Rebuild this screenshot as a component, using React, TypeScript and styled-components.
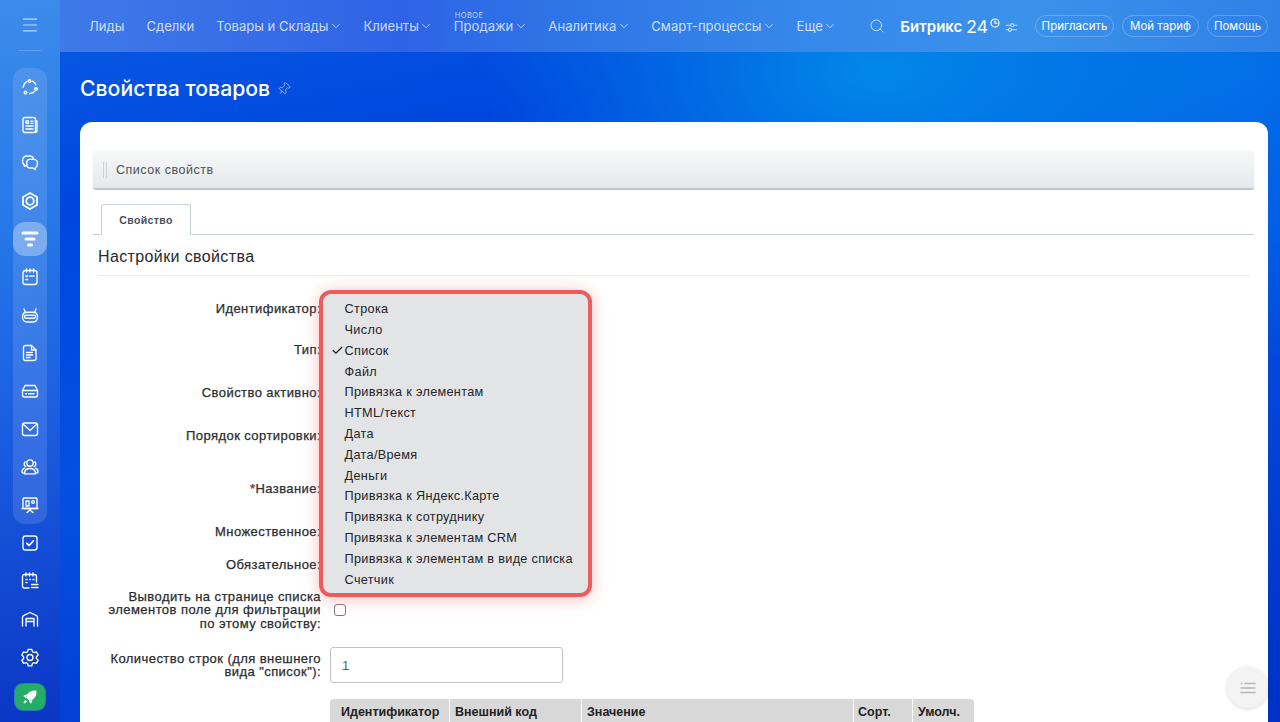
import React from 'react';
import styled, { createGlobalStyle } from 'styled-components';
import { ChevronDown, Search, Pin, Menu, Check } from 'lucide-react';

const GlobalStyle = createGlobalStyle`
  html, body {
    margin: 0;
    padding: 0;
    height: 722px;
    overflow: hidden;
    font-family: "Liberation Sans", Arial, sans-serif;
  }
  * {
    box-sizing: border-box;
  }
`;

const Page = styled.div`
  width: 1280px;
  height: 722px;
  display: flex;
  overflow: hidden;
  position: relative;
  background:
    radial-gradient(400px 220px at 880px 70px, #0288e8 0%, rgba(2, 136, 232, 0) 100%),
    radial-gradient(500px 300px at 1240px 60px, #0270e8 0%, rgba(2, 112, 232, 0) 100%),
    linear-gradient(168deg, #0a5ee4 0%, #0046de 22%, #0450e2 50%, #0030c4 100%);
`;

const Sidebar = styled.aside`
  width: 60px;
  flex: none;
  display: flex;
  flex-direction: column;
  align-items: center;
  background: linear-gradient(170deg, #3d8ceb 0%, #2474e6 35%, #1a5ce0 60%, #0a36c4 100%);
`;

const Burger = styled.div`
  height: 51px;
  width: 22px;
  display: flex;
  align-items: center;
  justify-content: center;
  color: #bcd6f8;
  border-bottom: 1px solid rgba(255, 255, 255, 0.2);
  flex: none;
`;

const SideGroup = styled.div`
  margin-top: 17px;
  width: 34px;
  border-radius: 12px;
  background: rgba(255, 255, 255, 0.12);
  display: flex;
  flex-direction: column;
`;

const SideItem = styled.div<{ $active?: boolean }>`
  width: 34px;
  height: 34px;
  margin: 2px 0;
  flex: none;
  display: flex;
  align-items: center;
  justify-content: center;
  border-radius: 12px;
  color: #fff;
  background: ${(p) => (p.$active ? 'rgba(255, 255, 255, 0.32)' : 'transparent')};
`;

const RocketTile = styled.div`
  width: 30px;
  height: 26px;
  margin-top: 8px;
  flex: none;
  display: flex;
  align-items: center;
  justify-content: center;
  border-radius: 8px;
  color: #fff;
  background: #25ad68;
  box-shadow: 0 0 0 1px rgba(70, 210, 140, 0.45);
`;

const Glyph = styled.svg.attrs({
  viewBox: '0 0 20 20',
  fill: 'none',
  stroke: 'currentColor',
  strokeWidth: 1.35,
  strokeLinecap: 'round',
  strokeLinejoin: 'round',
})<{ $size?: number }>`
  width: ${(p) => p.$size ?? 20}px;
  height: ${(p) => p.$size ?? 20}px;
  display: block;
`;

const Main = styled.main`
  flex: 1;
  min-width: 0;
  display: flex;
  flex-direction: column;
`;

const TopBar = styled.header`
  height: 52px;
  flex: none;
  display: flex;
  align-items: center;
  padding: 0 12px 0 29px;
  background: linear-gradient(90deg, #3f7ae8 0%, #2f63e6 28%, #2d6fe6 36%, #3687ea 60%, #3a92ea 80%, #3080e8 100%);
`;

const Nav = styled.nav`
  display: flex;
  align-items: center;
  gap: 22px;
`;

const NavItem = styled.a`
  position: relative;
  display: flex;
  align-items: center;
  gap: 2px;
  font-family: Inter, "Liberation Sans", sans-serif;
  font-size: 13.1px;
  color: rgba(255, 255, 255, 0.76);
  white-space: nowrap;
`;

const NavChevron = styled(ChevronDown)`
  margin: 0 -1.5px;
  color: rgba(255, 255, 255, 0.8);
`;

const NewTag = styled.span`
  position: absolute;
  left: 1px;
  top: -7px;
  font-size: 7.5px;
  letter-spacing: 0.4px;
  color: rgba(255, 255, 255, 0.72);
`;

const TopRight = styled.div`
  margin-left: auto;
  display: flex;
  align-items: center;
`;

const SearchButton = styled.span`
  color: rgba(255, 255, 255, 0.72);
  display: flex;
  margin-right: 15px;
`;

const Brand = styled.div`
  display: flex;
  align-items: center;
  font-family: Inter, "Liberation Sans", sans-serif;
  font-size: 15px;
  font-weight: 600;
  color: #fff;
  white-space: nowrap;
`;

const BrandNum = styled.span`
  margin-left: 4px;
  font-size: 17.5px;
  font-weight: 400;
`;

const BrandClock = styled.span`
  display: flex;
  margin: -6px 0 0 2px;
  color: #fff;
`;

const SettingsIcon = styled.span`
  display: flex;
  margin: 2px 17px 0 5px;
  color: rgba(255, 255, 255, 0.65);
`;

const PillRow = styled.div`
  display: flex;
  gap: 8px;
`;

const Pill = styled.button<{ $w: number }>`
  width: ${(p) => p.$w}px;
  height: 22px;
  padding: 0;
  border: 1px solid rgba(255, 255, 255, 0.24);
  border-radius: 11px;
  background: transparent;
  color: #fff;
  font-family: Inter, "Liberation Sans", sans-serif;
  font-size: 11.5px;
  white-space: nowrap;
`;

const TitleRow = styled.div`
  height: 70px;
  flex: none;
  display: flex;
  align-items: center;
  gap: 7px;
  padding: 1px 0 0 20px;
`;

const Title = styled.h1`
  margin: 0;
  font-family: Inter, "Liberation Sans", sans-serif;
  font-size: 21.2px;
  font-weight: 500;
  color: #fff;
`;

const PinIcon = styled.span`
  display: flex;
  color: rgba(255, 255, 255, 0.65);
  transform: rotate(40deg);
  margin-top: 3px;
`;

const Card = styled.section`
  flex: 1;
  min-height: 0;
  margin: 0 12px 0 20px;
  padding: 29px 14px 0 13px;
  border-radius: 12px 12px 0 0;
  background: #fff;
  overflow: hidden;
`;

const Toolbar = styled.div`
  height: 39px;
  display: flex;
  align-items: center;
  padding-left: 10px;
  border-radius: 3px;
  border-bottom: 2px solid #c0c7cb;
  background: linear-gradient(180deg, #f7f8f8 0%, #e4e9eb 100%);
  box-shadow: 0 0 1px rgba(0, 0, 0, 0.2);
`;

const Grip = styled.span`
  width: 4px;
  height: 16px;
  margin-right: 9px;
  border-left: 1px solid #cdd1d4;
  border-right: 1px solid #cdd1d4;
  background: #eef0f1;
`;

const ToolbarText = styled.span`
  font-size: 12.5px;
  letter-spacing: 0.52px;
  color: #4b5057;
`;

const TabBar = styled.div`
  margin-top: 14px;
  height: 31px;
  padding-left: 8px;
  border-bottom: 1px solid #c6d2d6;
`;

const Tab = styled.div`
  width: 90px;
  height: 31px;
  display: flex;
  align-items: center;
  justify-content: center;
  border: 1px solid #c6d2d6;
  border-bottom-color: #fff;
  border-radius: 3px 3px 0 0;
  background: #fff;
  font-size: 10.5px;
  font-weight: 700;
  letter-spacing: 0.35px;
  color: #4a4f57;
`;

const SectionTitle = styled.h2`
  margin: 0 4px 0 5px;
  height: 41px;
  display: flex;
  align-items: center;
  padding-top: 3px;
  border-bottom: 1px solid #e9ecee;
  font-size: 16px;
  font-weight: 400;
  letter-spacing: 0.38px;
  color: #26292e;
`;

const Form = styled.div`
  margin-top: 12px;
`;

const Row = styled.div<{ $h: number }>`
  height: ${(p) => p.$h}px;
  display: grid;
  grid-template-columns: 228px 1fr;
  align-items: center;
  column-gap: 9px;
`;

const Label = styled.label`
  padding-left: 12px;
  font-size: 13px;
  font-weight: 400;
  line-height: 13.5px;
  letter-spacing: 0.43px;
  -webkit-text-stroke: 0.25px #2a2c30;
  text-align: right;
  color: #2a2c30;
`;

const Required = styled.span`
  color: #e01010;
`;

const CheckBox = styled.span`
  display: block;
  width: 12px;
  height: 12px;
  margin-left: 4px;
  border: 1px solid #7c7c7c;
  border-radius: 3px;
  background: #fff;
`;

const TextField = styled.div`
  width: 233px;
  height: 36px;
  display: flex;
  align-items: center;
  padding-left: 11px;
  border: 1px solid #bfc3c7;
  border-radius: 3px;
  font-size: 13px;
  color: #535c69;
`;

const ValuesTable = styled.div`
  margin: 2px 0 0 237px;
  width: 644px;
  height: 40px;
  display: grid;
  grid-template-columns: 119px 131px 271px 58px 1fr;
  column-gap: 1px;
  border-radius: 4px 4px 0 0;
  overflow: hidden;
`;

const HeadCell = styled.div<{ $pad: number }>`
  background: #d8d8d8;
  padding: 6px 0 0 ${(p) => p.$pad}px;
  font-size: 12.5px;
  font-weight: 700;
  letter-spacing: 0;
  color: #222;
  white-space: nowrap;
`;

const SelectMenu = styled.ul`
  position: absolute;
  left: 319px;
  top: 290px;
  width: 273px;
  height: 307px;
  margin: 0;
  padding: 5.3px 0 0 0;
  list-style: none;
  border: 4px solid #ee5b5c;
  border-radius: 12px;
  background: #e3e4e6;
  box-shadow: 0 2px 16px rgba(238, 91, 92, 0.4);
`;

const MenuItem = styled.li`
  position: relative;
  height: 20.8px;
  line-height: 20.8px;
  padding-left: 21.6px;
  font-size: 12.7px;
  letter-spacing: 0.3px;
  color: #23252a;
  white-space: nowrap;
`;

const MenuCheck = styled.span`
  position: absolute;
  left: 8px;
  top: 3px;
  display: flex;
  color: #222;
`;

const FloatButton = styled.div`
  position: absolute;
  left: 1227px;
  top: 667px;
  width: 41px;
  height: 41px;
  display: flex;
  align-items: center;
  justify-content: center;
  border-radius: 50%;
  background: #f3f3f3;
  box-shadow: 0 1px 4px rgba(0, 0, 0, 0.14);
  color: #b4b8bd;
`;

const icons: Record<string, React.ReactNode> = {
  nodes: (
    <>
      <circle cx="9.500" cy="4" r="1.300" />
      <circle cx="16" cy="12" r="1.300" />
      <circle cx="5.500" cy="15.500" r="1.300" />
      <path d="M6.800 4.500C4.800 5.700 3.400 7.800 3.200 10.200M12.500 4.200c1.600.8 2.700 2 3.300 3.600M14.800 14.200c-1.200 1.500-2.900 2.300-5.300 2.300" />
    </>
  ),
  news: (
    <>
      <rect x="3" y="2.500" width="12.500" height="15" rx="2" />
      <path d="M15.500 6H17v9.500a2 2 0 0 1-2 2" />
      <path d="M6 6h2.500v2.200H6zM11 6.200h2M11 8.400h2M6 11h7M6 14h7" />
    </>
  ),
  chat: (
    <>
      <path d="M6.500 12.600H5.400l-1.200.8v-1.500A4 4 0 0 1 2.600 8.600V7a4 4 0 0 1 4-4h3a4 4 0 0 1 3.800 2.800" />
      <path d="M9.400 6.400H14a3.400 3.400 0 0 1 3.400 3.400v1.800a3.400 3.400 0 0 1-2 3.100v2L13 15H9.400A3 3 0 0 1 6.800 12V9a2.600 2.600 0 0 1 2.600-2.600z" />
    </>
  ),
  hex: (
    <>
      <path d="M10 2l7 4v8l-7 4-7-4V6z" strokeWidth="1.800" />
      <circle cx="10" cy="10" r="3.800" strokeWidth="1.800" />
    </>
  ),
  funnel: (
    <>
      <path d="M3 4h14" strokeWidth="3" />
      <path d="M6 10h8" strokeWidth="3" />
      <path d="M8.500 16h3" strokeWidth="3" />
    </>
  ),
  calendar: (
    <>
      <rect x="3" y="3.500" width="14" height="14" rx="2.500" />
      <path d="M6.500 2v3M10 2v3M13.500 2v3" />
      <path d="M6 9h1.500M10 9h1.500M13 9h1M6 12.500h1.500" strokeWidth="1.700" />
    </>
  ),
  robot: (
    <>
      <path d="M7 7.200h6c2.700 0 4.500 2 4.500 4.800 0 3-1.800 5-4.500 5H7c-2.700 0-4.500-2-4.500-5 0-2.800 1.800-4.800 4.500-4.800z" />
      <path d="M5.500 7.600 4 4M14.500 7.600 16 4" />
      <path d="M6 10.200h8a1.500 1.500 0 0 1 0 3H6a1.500 1.500 0 0 1 0-3z" />
    </>
  ),
  doc: (
    <>
      <path d="M5.500 2.500h6L16 7v8.500a2 2 0 0 1-2 2H5.500a2 2 0 0 1-2-2v-11a2 2 0 0 1 2-2z" />
      <path d="M11.500 2.500V7H16M6.500 9.500h6M6.500 12h6M6.500 14.500h3.500" />
    </>
  ),
  drive: (
    <>
      <path d="M5 4.500h10l2.500 5v4.500a2 2 0 0 1-2 2h-11a2 2 0 0 1-2-2V9.500z" />
      <path d="M2.500 9.500h15M5.500 12.700h1M8.500 12.700h5.500" />
    </>
  ),
  mail: (
    <>
      <rect x="2.500" y="4" width="15" height="12.500" rx="2" />
      <path d="m3 5 7 6.500L17 5" />
    </>
  ),
  users: (
    <>
      <circle cx="10" cy="6" r="3.200" />
      <path d="M4.500 16.800c0-3.200 2.200-5.300 5.500-5.300s5.500 2.100 5.500 5.300zM5.800 9.500a2.600 2.600 0 0 1-.5-4.600M14.200 9.500a2.600 2.600 0 0 0 .5-4.600M3.300 16c-1 0-1.300-.5-1.300-1.200 0-1.800.9-3 2.500-3.600M16.700 16c1 0 1.300-.5 1.300-1.200 0-1.800-.9-3-2.500-3.600" />
    </>
  ),
  board: (
    <>
      <rect x="3" y="3" width="14" height="10.500" rx="1" />
      <path d="M2 13.500h16M10 13.500V15M10 15l-3 2.500M10 15l3 2.500" />
      <path d="M6 6h3v5H6z" />
      <circle cx="13" cy="7" r="1.400" />
    </>
  ),
  task: (
    <>
      <rect x="3" y="3" width="14" height="14" rx="2.500" />
      <path d="m6.800 10.300 2.300 2.200 4.200-4.500" strokeWidth="1.800" />
    </>
  ),
  plan: (
    <>
      <path d="M9 17H4.500A2 2 0 0 1 2.500 15V5.500a2 2 0 0 1 2-2h10a2 2 0 0 1 2 2V11" />
      <path d="M6 2v3M9.500 2v3M13 2v3M6 8.500h1M9.500 8.500h1M13 8.500h1M6 11.500h1" />
      <path d="M11.500 13.500h6.500M11.500 16.500h6.500" />
    </>
  ),
  garage: (
    <>
      <path d="M2.500 17V8.500c0-1 .5-1.700 1.400-2.100L10 3.500l6.100 2.900c.9.400 1.400 1.100 1.400 2.100V17" />
      <path d="M6 17V9.500h8V17M6 12.500h8" />
    </>
  ),
  gear: (
    <>
      <path d="M8.200 2.300h3.600l.6 2.400 1.600.9 2.400-.7 1.800 3.100-1.800 1.700v1.800l1.800 1.700-1.800 3.100-2.400-.7-1.600.9-.6 2.400H8.200l-.6-2.400-1.600-.9-2.400.7-1.800-3.100 1.800-1.700V9.700L1.800 8l1.800-3.100 2.400.7 1.600-.9z" />
      <circle cx="10" cy="10.500" r="3" />
    </>
  ),
  rocket: (
    <>
      <path d="M16.500 3.500c-4-.3-7 1-9 4.200l-1 2.800 3 3 2.800-1c3.200-2 4.500-5 4.200-9z" fill="currentColor" />
      <path d="M6.500 8 3.500 9l2 1.500M12 13.500 11 16.500 9.500 14.500M5 14l-1.500 2.500L6 15" />
    </>
  ),
};

const groupIcons = ['nodes', 'news', 'chat', 'hex', 'funnel', 'calendar', 'robot', 'doc', 'drive', 'mail', 'users', 'board'];
const lowerIcons = ['task', 'plan', 'garage', 'gear'];

const navItems = [
  { label: 'Лиды' },
  { label: 'Сделки' },
  { label: 'Товары и Склады', more: true },
  { label: 'Клиенты', more: true },
  { label: 'Продажи', more: true, tag: 'НОВОЕ' },
  { label: 'Аналитика', more: true },
  { label: 'Смарт-процессы', more: true },
  { label: 'Еще', more: true },
];

const propertyTypes = [
  'Строка',
  'Число',
  'Список',
  'Файл',
  'Привязка к элементам',
  'HTML/текст',
  'Дата',
  'Дата/Время',
  'Деньги',
  'Привязка к Яндекс.Карте',
  'Привязка к сотруднику',
  'Привязка к элементам CRM',
  'Привязка к элементам в виде списка',
  'Счетчик',
];

const tableHead = [
  { label: 'Идентификатор', pad: 11 },
  { label: 'Внешний код', pad: 5 },
  { label: 'Значение', pad: 5 },
  { label: 'Сорт.', pad: 4 },
  { label: 'Умолч.', pad: 5 },
];

const App: React.FC = () => (
  <Page>
    <GlobalStyle />
    <Sidebar>
      <Burger>
        <Menu size={20} strokeWidth={1.4} />
      </Burger>
      <SideGroup>
        {groupIcons.map((name) => (
          <SideItem key={name} $active={name === 'funnel'}>
            <Glyph>{icons[name]}</Glyph>
          </SideItem>
        ))}
      </SideGroup>
      {lowerIcons.map((name) => (
        <SideItem key={name}>
          <Glyph>{icons[name]}</Glyph>
        </SideItem>
      ))}
      <RocketTile>
        <Glyph $size={18}>{icons.rocket}</Glyph>
      </RocketTile>
    </Sidebar>

    <Main>
      <TopBar>
        <Nav>
          {navItems.map((item) => (
            <NavItem key={item.label}>
              {item.tag && <NewTag>{item.tag}</NewTag>}
              {item.label}
              {item.more && <NavChevron size={14} strokeWidth={1.4} />}
            </NavItem>
          ))}
        </Nav>
        <TopRight>
          <SearchButton>
            <Search size={16} strokeWidth={1.5} />
          </SearchButton>
          <Brand>
            Битрикс<BrandNum>24</BrandNum>
            <BrandClock>
              <Glyph $size={10}>
                <circle cx="10" cy="10" r="8" strokeWidth="2.400" />
                <path d="M10 5.500V10.500H14" strokeWidth="2.400" />
              </Glyph>
            </BrandClock>
          </Brand>
          <SettingsIcon>
            <Glyph $size={13}>
              <path d="M2 6.500h6.500M13.500 6.500H18M2 13.500h3M10 13.500h8" strokeWidth="1.700" />
              <circle cx="11" cy="6.500" r="2.400" strokeWidth="1.700" />
              <circle cx="7.500" cy="13.500" r="2.400" strokeWidth="1.700" />
            </Glyph>
          </SettingsIcon>
          <PillRow>
            <Pill $w={79}>Пригласить</Pill>
            <Pill $w={77}>Мой тариф</Pill>
            <Pill $w={61}>Помощь</Pill>
          </PillRow>
        </TopRight>
      </TopBar>

      <TitleRow>
        <Title>Свойства товаров</Title>
        <PinIcon>
          <Pin size={14} strokeWidth={1.3} />
        </PinIcon>
      </TitleRow>

      <Card>
        <Toolbar>
          <Grip />
          <ToolbarText>Список свойств</ToolbarText>
        </Toolbar>
        <TabBar>
          <Tab>Свойство</Tab>
        </TabBar>
        <SectionTitle>Настройки свойства</SectionTitle>
        <Form>
          <Row $h={42}>
            <Label>Идентификатор:</Label>
          </Row>
          <Row $h={40}>
            <Label>Тип:</Label>
          </Row>
          <Row $h={45}>
            <Label>Свойство активно:</Label>
          </Row>
          <Row $h={42}>
            <Label>Порядок сортировки:</Label>
          </Row>
          <Row $h={64}>
            <Label>
              <Required>*</Required>Название:
            </Label>
          </Row>
          <Row $h={22}>
            <Label>Множественное:</Label>
          </Row>
          <Row $h={44}>
            <Label>Обязательное:</Label>
          </Row>
          <Row $h={46}>
            <Label>
              Выводить на странице списка элементов поле для фильтрации по этому свойству:
            </Label>
            <CheckBox />
          </Row>
          <Row $h={64}>
            <Label>Количество строк (для внешнего вида "список"):</Label>
            <TextField>1</TextField>
          </Row>
          <ValuesTable>
            {tableHead.map((cell) => (
              <HeadCell key={cell.label} $pad={cell.pad}>
                {cell.label}
              </HeadCell>
            ))}
          </ValuesTable>
        </Form>
      </Card>
    </Main>

    <SelectMenu>
      {propertyTypes.map((type) => (
        <MenuItem key={type}>
          {type === 'Список' && (
            <MenuCheck>
              <Check size={13} strokeWidth={2.2} />
            </MenuCheck>
          )}
          {type}
        </MenuItem>
      ))}
    </SelectMenu>

    <FloatButton>
      <Glyph $size={20}>
        <path d="M7 5.500h10M3 10h14M3 14.500h14" strokeWidth="1.600" />
        <circle cx="3.500" cy="5.500" r="1" fill="currentColor" stroke="none" />
      </Glyph>
    </FloatButton>
  </Page>
);

export default App;
